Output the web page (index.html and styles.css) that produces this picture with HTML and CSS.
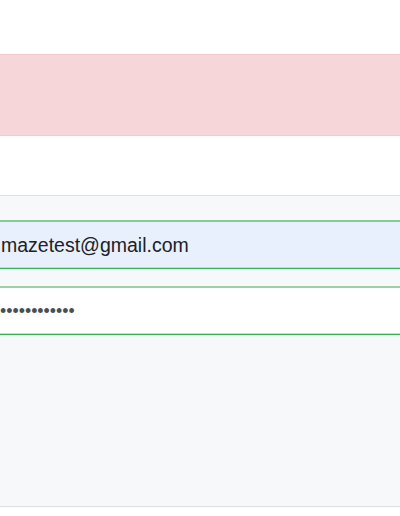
FILE: index.html
```html
<!DOCTYPE html>
<html lang="en">
<head>
<meta charset="utf-8">
<title>Login</title>
<link rel="stylesheet" href="styles.css">
</head>
<body>
  <div class="alert" role="alert"></div>
  <form class="panel">
    <div class="field field-email">mazetest@gmail.com</div>
    <div class="field field-password"><span class="dots">••••••••••••</span></div>
  </form>
</body>
</html>
```
FILE: styles.css
```css
html, body {
  margin: 0;
  padding: 0;
  background: #ffffff;
}
body {
  padding-top: 54px;
  font-family: "Liberation Sans", Arial, sans-serif;
  overflow: hidden;
  height: 516px;
  box-sizing: border-box;
}
.alert {
  box-sizing: border-box;
  height: 82px;
  margin: 0 -2px 59px;
  background: #f7d6d9;
  border: 1px solid #f4c9cd;
}
.panel {
  box-sizing: border-box;
  height: 312px;
  margin: 0 -2px;
  padding: 24px 0 0;
  background: #f7f8fa;
  border: 1px solid #dedfe0;
  display: flex;
  flex-direction: column;
  gap: 17px;
}
.field {
  box-sizing: border-box;
  height: 49px;
  display: flex;
  align-items: center;
  padding-left: 2px;
  border-top: 2px solid #84cd9a;
  border-bottom: 1px solid #34b454;
  box-shadow: inset 0 -1px 0 #cdd9d0;
}
.field-email {
  background: #e8f0fe;
  color: #202124;
  font-size: 19.5px;
}
.field-password {
  background: #ffffff;
  border-top: 2px solid #9ccfaa;
}
.dots {
  font-size: 17.8px;
  color: #4a4f55;
  margin-left: -1px;
}
```
